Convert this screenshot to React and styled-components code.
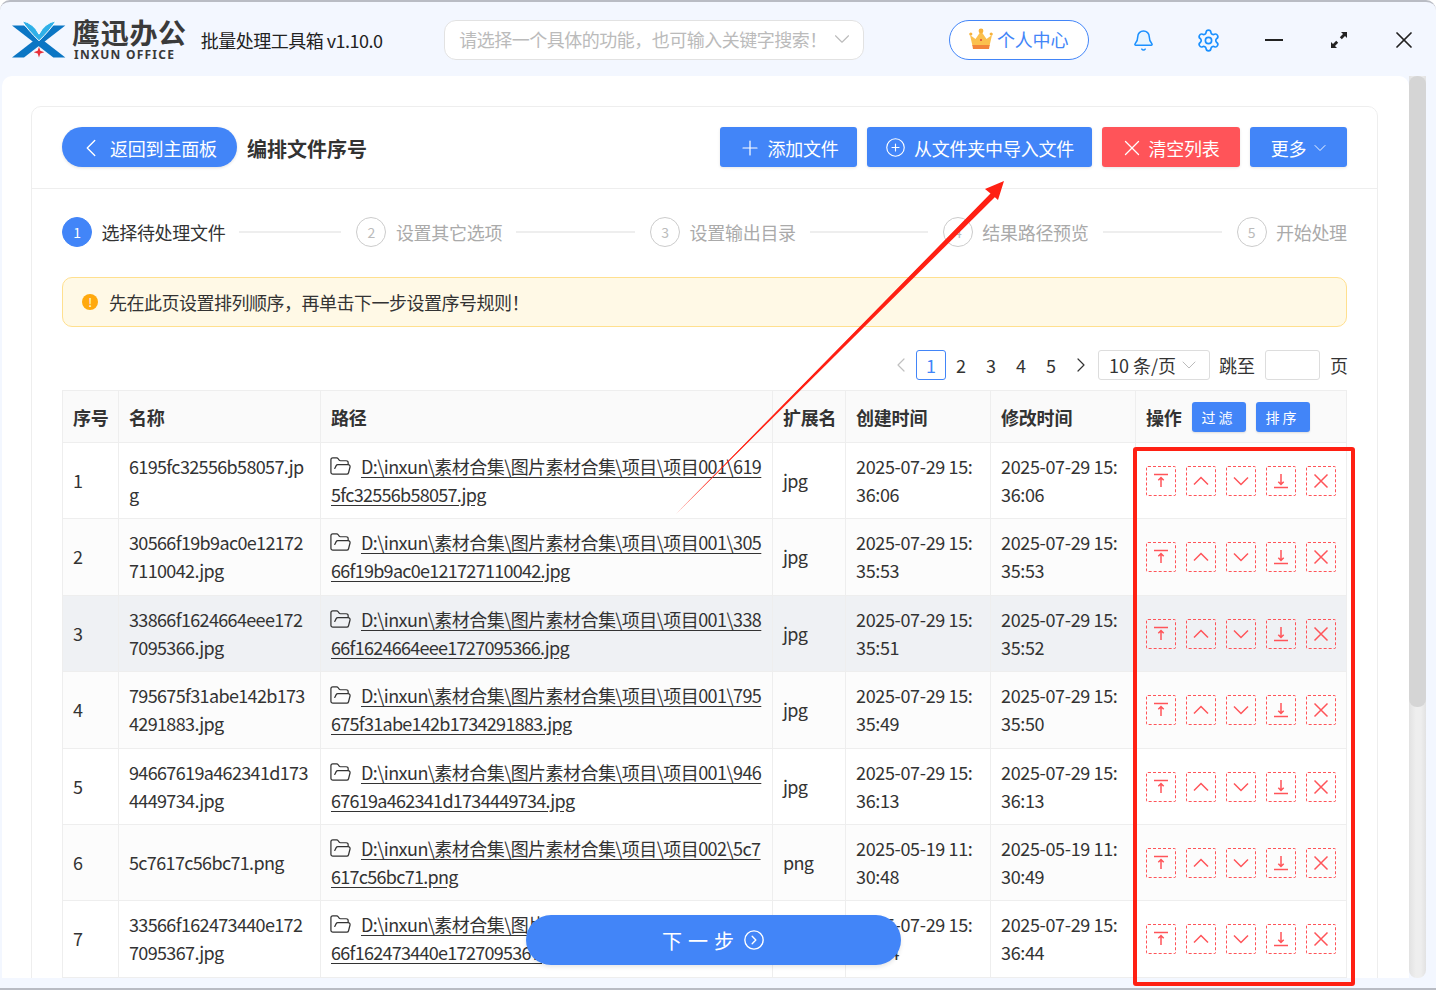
import React from "react";
import styled, { createGlobalStyle } from "styled-components";
import { Bell, Settings, ChevronLeft, ChevronRight, ChevronDown, Plus, CirclePlus, X, FolderOpen, CircleChevronRight } from "lucide-react";

const blue = "#4285f8";
const danger = "#ff5459";

const GlobalStyle = createGlobalStyle`
  html, body {
    margin: 0;
    padding: 0;
    background: #fff;
  }
  body {
    font-family: "Noto Sans CJK SC", "Noto Sans", sans-serif;
    font-size: 18px;
    letter-spacing: -0.2px;
    color: #333;
  }
`;

const Window = styled.div`
  position: relative;
  width: 1436px;
  height: 990px;
  overflow: hidden;
  box-sizing: border-box;
  background: #f3f7ff;
  border-top: 2px solid #b9bcc4;
  border-bottom: 2px solid #b9bcc4;
  border-radius: 10px 10px 0 0;
`;

const TopBar = styled.header`
  display: flex;
  align-items: center;
  box-sizing: border-box;
  height: 74px;
  padding: 2px 0 0 12px;
`;

const Logo = styled.div`
  display: flex;
  align-items: center;
  width: 189px;
  margin-top: -2px;
  gap: 6px;
`;

const LogoText = styled.div`
  display: flex;
  flex-direction: column;
  color: #3a3a3a;
`;

const LogoTitle = styled.div`
  font-size: 28px;
  font-weight: 700;
  line-height: 29px;
  letter-spacing: 0.7px;
  white-space: nowrap;
`;

const LogoSub = styled.div`
  font-family: "Noto Sans", sans-serif;
  font-size: 12px;
  font-weight: 700;
  line-height: 12px;
  letter-spacing: 1.25px;
  margin: 2px 0 0 2px;
  white-space: nowrap;
`;

const AppTitle = styled.div`
  width: 244px;
  font-size: 18px;
  letter-spacing: -0.5px;
  color: #222;
  white-space: nowrap;
`;

const Search = styled.div`
  display: flex;
  align-items: center;
  justify-content: space-between;
  box-sizing: border-box;
  width: 420px;
  height: 40px;
  padding: 0 8px 2px 14px;
  background: #fff;
  border: 1px solid #e2e2e2;
  border-radius: 12px;
  color: #bbb;
  letter-spacing: -0.5px;
  white-space: nowrap;
`;

const UserPill = styled.div`
  display: flex;
  align-items: center;
  justify-content: center;
  gap: 4px;
  box-sizing: border-box;
  width: 140px;
  height: 40px;
  margin-left: 85px;
  padding-bottom: 2px;
  background: #fff;
  border: 1px solid ${blue};
  border-radius: 20px;
  color: ${blue};
`;

const WinControls = styled.div`
  display: flex;
  align-items: center;
  margin-left: 22.5px;
`;

const WinButton = styled.div`
  display: flex;
  align-items: center;
  justify-content: center;
  width: 65px;
  height: 30px;
`;

const Body = styled.div`
  display: flex;
  height: 902px;
  padding-left: 2px;
`;

const Panel = styled.main`
  flex: none;
  width: 1407px;
  height: 100%;
  overflow: hidden;
  background: #fff;
  border-radius: 10px 10px 0 0;
  box-sizing: border-box;
  padding: 30px 0 0 29px;
`;

const ScrollTrack = styled.div`
  flex: none;
  width: 17px;
  height: 100%;
  background: linear-gradient(90deg, #e2e2e2, #eee 40%, #eee 70%, #e2e2e2);
  border-radius: 0 0 8px 8px;
`;

const ScrollThumb = styled.div`
  height: 631px;
  background: #d5d5d5;
  border-radius: 8px;
`;

const Card = styled.section`
  box-sizing: border-box;
  width: 1347px;
  min-height: 900px;
  border: 1px solid #eee;
  border-radius: 10px 10px 0 0;
`;

const CardHeader = styled.div`
  display: flex;
  align-items: center;
  box-sizing: border-box;
  height: 82px;
  padding: 0 30px 2px;
  border-bottom: 1px solid #eee;
`;

const BackButton = styled.button`
  display: flex;
  align-items: center;
  gap: 4px;
  box-sizing: border-box;
  width: 175px;
  height: 40px;
  padding: 2px 0 0 14px;
  border: none;
  border-radius: 20px;
  background: ${blue};
  color: #fff;
  font: inherit;
  letter-spacing: inherit;
  box-shadow: 0 1px 3px rgba(0, 0, 0, 0.12);
`;

const PageTitle = styled.h1`
  flex: 1;
  margin: 3px 0 0 10px;
  font-size: 20px;
  font-weight: 700;
  letter-spacing: 0;
  color: #333;
`;

const ToolButtons = styled.div`
  display: flex;
  gap: 10px;
`;

const ToolButton = styled.button`
  display: flex;
  align-items: center;
  justify-content: center;
  gap: ${(p) => p.$gap}px;
  box-sizing: border-box;
  width: ${(p) => p.$width}px;
  height: 40px;
  padding: 2px ${(p) => p.$right || 0}px 0 ${(p) => p.$left || 0}px;
  border: none;
  border-radius: 3px;
  background: ${(p) => (p.$danger ? danger : blue)};
  color: #fff;
  font: inherit;
  letter-spacing: inherit;
  box-shadow: 0 1px 3px rgba(0, 0, 0, 0.1);
`;

const Content = styled.div`
  padding: 28px 30px 0;
`;

const Steps = styled.div`
  display: flex;
  align-items: center;
  height: 30px;
`;

const StepCircle = styled.span`
  display: flex;
  align-items: center;
  justify-content: center;
  flex: none;
  box-sizing: border-box;
  width: 30px;
  height: 30px;
  border-radius: 50%;
  font-size: 14px;
  border: 1px solid ${(p) => (p.$active ? blue : "#ccc")};
  background: ${(p) => (p.$active ? blue : "#fff")};
  color: ${(p) => (p.$active ? "#fff" : "#bbb")};
`;

const StepLabel = styled.span`
  flex: none;
  margin-left: 9.5px;
  letter-spacing: -0.3px;
  color: ${(p) => (p.$active ? "#333" : "#aaa")};
  white-space: nowrap;
`;

const StepLine = styled.span`
  flex: none;
  width: ${(p) => p.$width}px;
  height: 2px;
  margin: 0 15px 0 14px;
  background: #eee;
`;

const Notice = styled.div`
  display: flex;
  align-items: center;
  gap: 11px;
  box-sizing: border-box;
  height: 50px;
  margin-top: 30px;
  padding-left: 19px;
  background: #fff9e6;
  border: 1px solid #ffe08f;
  border-radius: 10px;
  letter-spacing: -0.5px;
`;

const NoticeDot = styled.span`
  display: flex;
  align-items: center;
  justify-content: center;
  width: 16px;
  height: 16px;
  border-radius: 50%;
  background: #ffa90f;
  color: #fff;
  font-size: 12px;
  line-height: 1;
`;

const Pager = styled.div`
  display: flex;
  align-items: center;
  justify-content: flex-end;
  height: 30px;
  margin: 23px -1px 0 0;
  letter-spacing: 0;
`;

const PageItem = styled.span`
  display: flex;
  align-items: center;
  justify-content: center;
  box-sizing: border-box;
  width: 30px;
  height: 30px;
  border-radius: 3px;
  border: 1px solid ${(p) => (p.$active ? blue : "transparent")};
  color: ${(p) => (p.$active ? blue : p.$muted ? "#c0c0c0" : "#333")};
`;

const PageSize = styled.div`
  display: flex;
  align-items: center;
  justify-content: space-between;
  box-sizing: border-box;
  width: 112px;
  height: 30px;
  margin-left: 2px;
  padding: 0 8px 0 10px;
  border: 1px solid #ddd;
  border-radius: 3px;
  white-space: nowrap;
`;

const PagerText = styled.span`
  margin-left: ${(p) => p.$gap}px;
  white-space: nowrap;
`;

const PageInput = styled.div`
  box-sizing: border-box;
  width: 55px;
  height: 30px;
  margin-left: 10px;
  border: 1px solid #ddd;
  border-radius: 3px;
`;

const Table = styled.table`
  width: 1285px;
  margin-top: 10px;
  table-layout: fixed;
  border-collapse: collapse;
  border: 1px solid #eee;
`;

const HeadCell = styled.th`
  height: 51px;
  padding: 0 10px;
  background: #fafafa;
  border: 1px solid #eee;
  text-align: left;
  font-size: 18px;
  font-weight: 700;
  white-space: nowrap;
`;

const Row = styled.tr`
  height: ${(p) => p.$height}px;
  background: ${(p) => (p.$hover ? "#eff1f4" : p.$alt ? "#fcfcfc" : "#fff")};
`;

const Cell = styled.td`
  padding: 0 10px 2px;
  border: 1px solid #eee;
  line-height: 28px;
  letter-spacing: ${(p) => p.$spacing ?? -0.65}px;
  color: #333;
  white-space: nowrap;
  overflow: hidden;
`;

const OpCell = styled(Cell)`
  padding: 0 10px;
`;

const PathLine = styled.div`
  letter-spacing: ${(p) => p.$spacing}px;
  text-decoration: underline;
  text-underline-offset: 3px;
`;

const FolderIcon = styled.span`
  display: inline-block;
  width: 30px;
  height: 20px;
  vertical-align: -3px;
  color: #333;

  svg {
    display: block;
    margin: -2px 0 0 -2px;
  }
`;

const HeadActions = styled.div`
  display: flex;
  align-items: center;
  gap: 10px;
`;

const SmallButton = styled.button`
  box-sizing: border-box;
  width: 54px;
  height: 30px;
  margin: 0;
  padding: 0;
  border: none;
  border-radius: 3px;
  background: ${blue};
  color: #fff;
  font: inherit;
  font-size: 14px;
  font-weight: 400;
  letter-spacing: 3px;
  box-shadow: 0 1px 2px rgba(0, 0, 0, 0.12);
`;

const OpGroup = styled.div`
  display: flex;
  gap: 10px;
`;

const OpButton = styled.span`
  display: flex;
  align-items: center;
  justify-content: center;
  box-sizing: border-box;
  width: 30px;
  height: 30px;
  border: 1px dashed ${danger};
  border-radius: 2px;
  color: ${danger};
`;

const NextButton = styled.button`
  position: absolute;
  left: 526px;
  top: 913px;
  display: flex;
  align-items: center;
  justify-content: center;
  gap: 3px;
  width: 375px;
  height: 50px;
  padding: 0;
  border: none;
  border-radius: 25px;
  background: ${blue};
  color: #fff;
  font: inherit;
  font-size: 20px;
  letter-spacing: 6px;
  box-shadow: 0 2px 4px rgba(0, 0, 0, 0.1);
`;

const RedFrame = styled.div`
  position: absolute;
  left: 1133px;
  top: 445px;
  box-sizing: border-box;
  width: 222px;
  height: 539px;
  border: 4px solid #ff2013;
  border-radius: 3px;
  pointer-events: none;
`;

const ArrowOverlay = styled.svg`
  position: absolute;
  left: 0;
  top: -2px;
  pointer-events: none;
`;

const LogoMark = () => (
  <svg width="54" height="39" viewBox="36 28 162 116">
    <path d="M36 44H72L196 140H160Z" fill="#0b76c4" />
    <path d="M196 44H160L36 140H72Z" fill="#0b76c4" />
    <path d="M66 30Q100 36 117 70Q134 36 168 30Q152 56 117 90Q82 56 66 30Z" fill="#2fb0e8" stroke="#fff" strokeWidth="3" />
    <path d="M117 108L121 120L133 124L121 128L117 140L113 128L101 124L113 120Z" fill="#e8303a" />
  </svg>
);

const Crown = () => (
  <svg width="24" height="22" viewBox="0 0 24 22">
    <path d="M1 7L6.5 11L12 3L17.5 11L23 7L20.5 18H3.5Z" fill="#fbc04e" />
    <circle cx="12" cy="3" r="2.4" fill="#f7b23b" />
    <circle cx="1.8" cy="6" r="1.6" fill="#f7b23b" />
    <circle cx="22.2" cy="6" r="1.6" fill="#f7b23b" />
    <path d="M3.3 17H20.7L20 21H4Z" fill="#f2843a" />
    <circle cx="12" cy="12" r="1" fill="#d9453a" />
  </svg>
);

const Expand = () => (
  <svg width="18" height="18" viewBox="0 0 18 18" fill="#222">
    <path d="M17 1V7L15 5L11.8 8.2L9.8 6.2L13 3L11 1Z" />
    <path d="M1 17V11L3 13L6.2 9.8L8.2 11.8L5 15L7 17Z" />
  </svg>
);

const OpIcon = ({ d }) => (
  <svg width="20" height="20" viewBox="0 0 20 20" fill="none" stroke="currentColor" strokeWidth="1.5">
    <path d={d} />
  </svg>
);

const opIcons = [
  "M3 3.5H17M10 16V7M7.3 9.3L10 6.5L12.7 9.3",
  "M3 13.5L10 6.5L17 13.5",
  "M3 6.5L10 13.5L17 6.5",
  "M3 16.5H17M10 3V13M7.3 10.7L10 13.5L12.7 10.7",
  "M3.5 3.5L16.5 16.5M16.5 3.5L3.5 16.5",
];

const steps = [
  { name: "选择待处理文件", line: 102 },
  { name: "设置其它选项", line: 119 },
  { name: "设置输出目录", line: 118 },
  { name: "结果路径预览", line: 119 },
  { name: "开始处理" },
];

const rowHeights = [76, 77, 76, 77, 76, 76, 77];

const base = "D:\\inxun\\素材合集\\图片素材合集\\项目\\项目";

const files = [
  { name: ["6195fc32556b58057.jp", "g"], path: ["001\\619", "5fc32556b58057.jpg"], ext: "jpg", day: "2025-07-29 15:", made: "36:06", changed: "36:06" },
  { name: ["30566f19b9ac0e12172", "7110042.jpg"], path: ["001\\305", "66f19b9ac0e121727110042.jpg"], ext: "jpg", day: "2025-07-29 15:", made: "35:53", changed: "35:53" },
  { name: ["33866f1624664eee172", "7095366.jpg"], path: ["001\\338", "66f1624664eee1727095366.jpg"], ext: "jpg", day: "2025-07-29 15:", made: "35:51", changed: "35:52" },
  { name: ["795675f31abe142b173", "4291883.jpg"], path: ["001\\795", "675f31abe142b1734291883.jpg"], ext: "jpg", day: "2025-07-29 15:", made: "35:49", changed: "35:50" },
  { name: ["94667619a462341d173", "4449734.jpg"], path: ["001\\946", "67619a462341d1734449734.jpg"], ext: "jpg", day: "2025-07-29 15:", made: "36:13", changed: "36:13" },
  { name: ["5c7617c56bc71.png"], path: ["002\\5c7", "617c56bc71.png"], ext: "png", day: "2025-05-19 11:", made: "30:48", changed: "30:49" },
  { name: ["33566f162473440e172", "7095367.jpg"], path: ["001\\335", "66f162473440e1727095367.jpg"], ext: "jpg", day: "2025-07-29 15:", made: "36:44", changed: "36:44" },
];

const columns = [
  { title: "序号", width: 56 },
  { title: "名称", width: 202 },
  { title: "路径", width: 452 },
  { title: "扩展名", width: 73 },
  { title: "创建时间", width: 145 },
  { title: "修改时间", width: 145 },
];

function App() {
  return (
    <Window>
      <GlobalStyle />
      <TopBar>
        <Logo>
          <LogoMark />
          <LogoText>
            <LogoTitle>鹰迅办公</LogoTitle>
            <LogoSub>INXUN OFFICE</LogoSub>
          </LogoText>
        </Logo>
        <AppTitle>批量处理工具箱 v1.10.0</AppTitle>
        <Search>
          请选择一个具体的功能，也可输入关键字搜索！
          <ChevronDown size={26} color="#bbb" strokeWidth={1} />
        </Search>
        <UserPill>
          <Crown />
          个人中心
        </UserPill>
        <WinControls>
          <WinButton>
            <Bell size={23} color="#1a90ff" fill="#e6f4ff" strokeWidth={1.6} />
          </WinButton>
          <WinButton>
            <Settings size={25} color="#1a90ff" strokeWidth={1.6} />
          </WinButton>
          <WinButton>
            <svg width="18" height="2">
              <rect width="18" height="2" fill="#222" />
            </svg>
          </WinButton>
          <WinButton>
            <Expand />
          </WinButton>
          <WinButton>
            <X size={28} color="#222" strokeWidth={1.5} />
          </WinButton>
        </WinControls>
      </TopBar>

      <Body>
        <Panel>
          <Card>
            <CardHeader>
              <BackButton>
                <ChevronLeft size={30} strokeWidth={1.1} />
                返回到主面板
              </BackButton>
              <PageTitle>编排文件序号</PageTitle>
              <ToolButtons>
                <ToolButton $width={137} $gap={5}>
                  <Plus size={24} strokeWidth={1.2} />
                  添加文件
                </ToolButton>
                <ToolButton $width={225} $gap={8}>
                  <CirclePlus size={21} strokeWidth={1.3} />
                  从文件夹中导入文件
                </ToolButton>
                <ToolButton $width={138} $gap={3} $right={3} $danger>
                  <X size={26} strokeWidth={1.2} />
                  清空列表
                </ToolButton>
                <ToolButton $width={97} $gap={4} $left={4}>
                  更多
                  <ChevronDown size={20} strokeWidth={1.1} />
                </ToolButton>
              </ToolButtons>
            </CardHeader>

            <Content>
              <Steps>
                {steps.map((step, i) => (
                  <React.Fragment key={step.name}>
                    <StepCircle $active={i === 0}>{i + 1}</StepCircle>
                    <StepLabel $active={i === 0}>{step.name}</StepLabel>
                    {step.line && <StepLine $width={step.line} />}
                  </React.Fragment>
                ))}
              </Steps>

              <Notice>
                <NoticeDot>!</NoticeDot>
                先在此页设置排列顺序，再单击下一步设置序号规则！
              </Notice>

              <Pager>
                <PageItem $muted>
                  <ChevronLeft size={24} strokeWidth={1.2} />
                </PageItem>
                {[1, 2, 3, 4, 5].map((n) => (
                  <PageItem key={n} $active={n === 1}>
                    {n}
                  </PageItem>
                ))}
                <PageItem>
                  <ChevronRight size={24} strokeWidth={1.2} />
                </PageItem>
                <PageSize>
                  10 条/页
                  <ChevronDown size={24} color="#bbb" strokeWidth={1} />
                </PageSize>
                <PagerText $gap={9}>跳至</PagerText>
                <PageInput />
                <PagerText $gap={10}>页</PagerText>
              </Pager>

              <Table>
                <colgroup>
                  {columns.map((c) => (
                    <col key={c.title} style={{ width: c.width }} />
                  ))}
                  <col />
                </colgroup>
                <thead>
                  <tr>
                    {columns.map((c) => (
                      <HeadCell key={c.title}>{c.title}</HeadCell>
                    ))}
                    <HeadCell>
                      <HeadActions>
                        操作
                        <SmallButton>过滤</SmallButton>
                        <SmallButton>排序</SmallButton>
                      </HeadActions>
                    </HeadCell>
                  </tr>
                </thead>
                <tbody>
                  {files.map((file, i) => (
                    <Row key={file.path[1]} $height={rowHeights[i]} $hover={i === 2} $alt={i % 2 === 1}>
                      <Cell>{i + 1}</Cell>
                      <Cell>
                        {file.name.map((line) => (
                          <div key={line}>{line}</div>
                        ))}
                      </Cell>
                      <Cell>
                        <PathLine $spacing={-0.55}>
                          <FolderIcon>
                            <FolderOpen size={23} strokeWidth={1.3} />
                          </FolderIcon>
                          {base + file.path[0]}
                        </PathLine>
                        <PathLine $spacing={-0.72}>{file.path[1]}</PathLine>
                      </Cell>
                      <Cell>{file.ext}</Cell>
                      <Cell $spacing={-0.35}>
                        <div>{file.day}</div>
                        <div>{file.made}</div>
                      </Cell>
                      <Cell $spacing={-0.35}>
                        <div>{file.day}</div>
                        <div>{file.changed}</div>
                      </Cell>
                      <OpCell>
                        <OpGroup>
                          {opIcons.map((d) => (
                            <OpButton key={d}>
                              <OpIcon d={d} />
                            </OpButton>
                          ))}
                        </OpGroup>
                      </OpCell>
                    </Row>
                  ))}
                </tbody>
              </Table>
            </Content>
          </Card>
        </Panel>
        <ScrollTrack>
          <ScrollThumb />
        </ScrollTrack>
      </Body>

      <NextButton>
        下一步
        <CircleChevronRight size={22} strokeWidth={1.5} />
      </NextButton>

      <ArrowOverlay width="1436" height="990">
        <path d="M675 515L990.5 193.5L985 189L1004 181L998 200L993 195.5Z" fill="#ff2013" />
        <path d="M675 515L993 192L996.5 195.5Z" fill="#ff2013" />
      </ArrowOverlay>
      <RedFrame />
    </Window>
  );
}

export default App;
